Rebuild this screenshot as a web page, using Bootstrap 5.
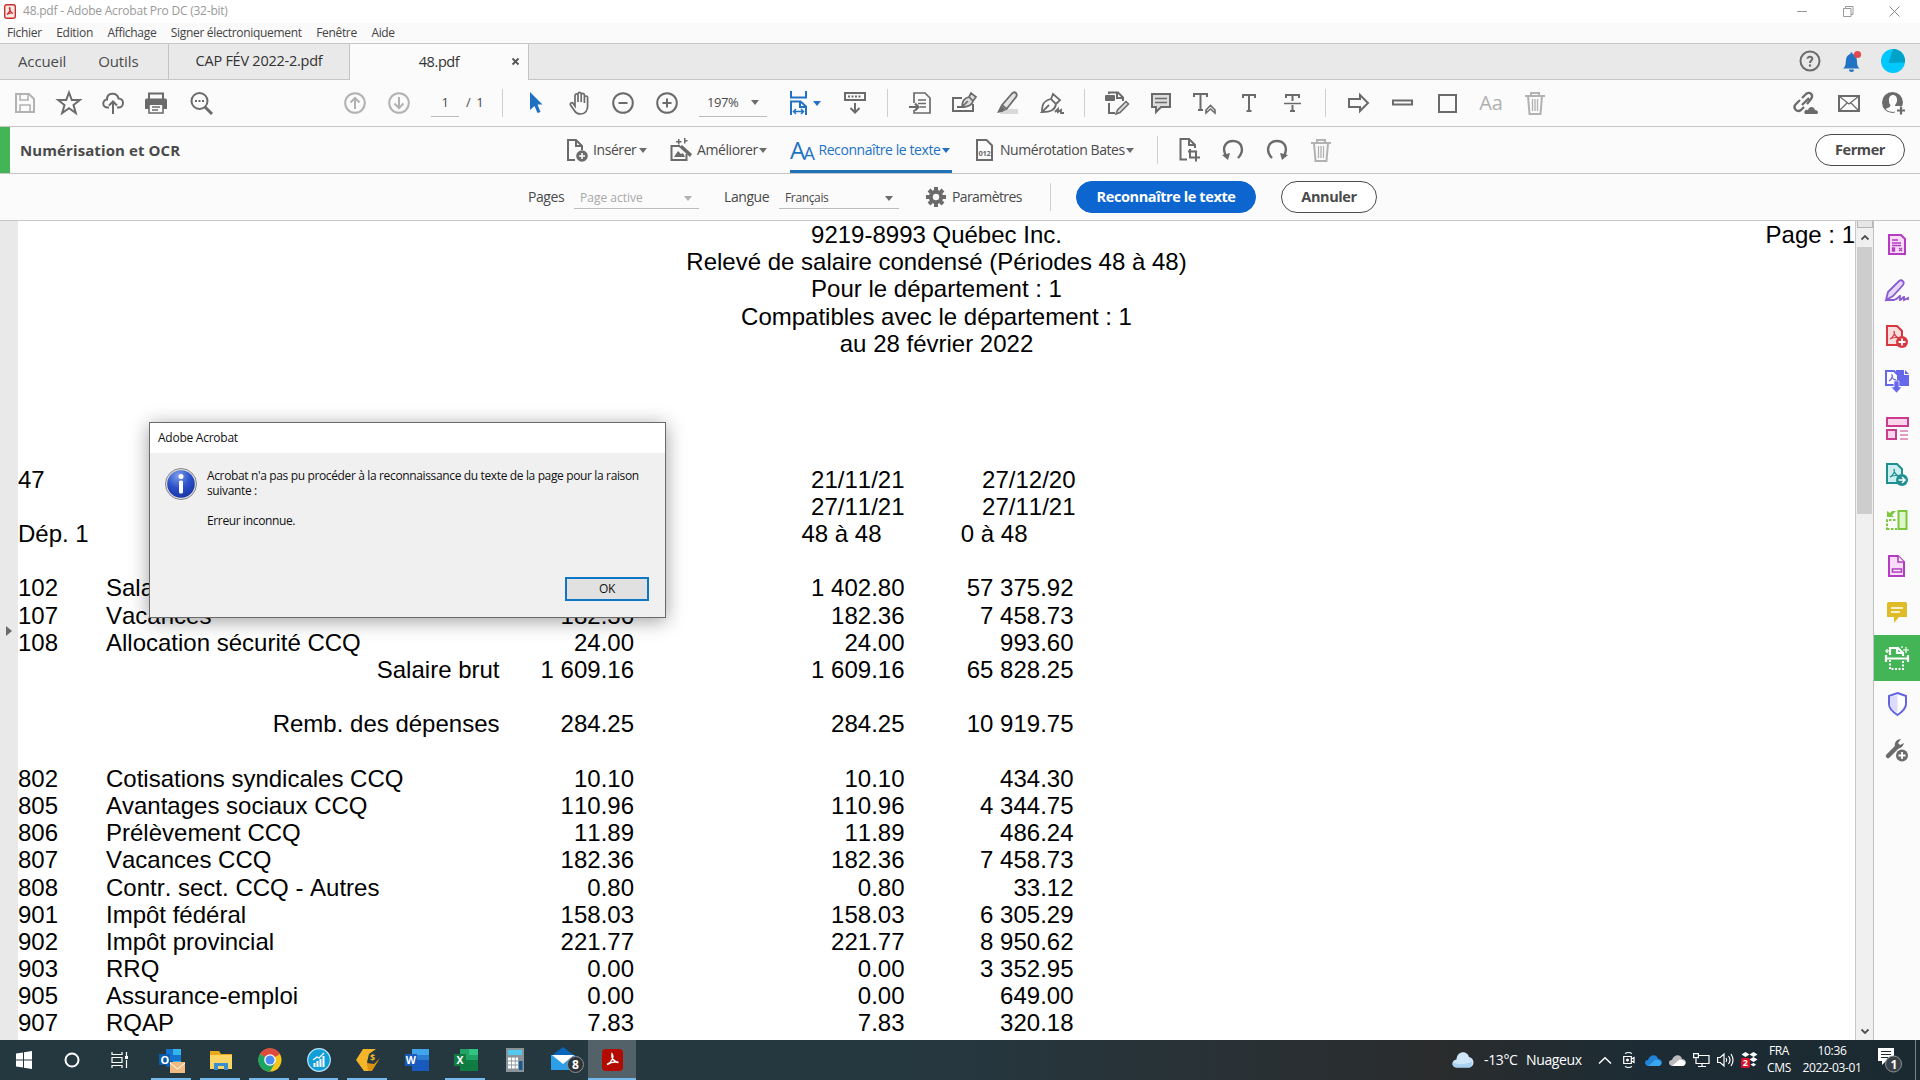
<!DOCTYPE html>
<html lang="fr">
<head>
<meta charset="utf-8">
<title>48.pdf - Adobe Acrobat Pro DC (32-bit)</title>
<link href="https://cdn.jsdelivr.net/npm/bootstrap@5.3.0/dist/css/bootstrap.min.css" rel="stylesheet">
<style>
body{width:1920px;height:1080px;overflow:hidden;background:#fff;font-family:"Open Sans","Noto Sans",sans-serif;font-size:12px;line-height:1.2;color:#4a4a4a;letter-spacing:-.35px}
svg{display:block;flex:none;overflow:visible}
.i{fill:none;stroke:#6b6b6b}
.i:not([stroke-width]){stroke-width:2}
.f{fill:#6b6b6b;stroke:none}
.dis{opacity:.5}
.titlebar{height:23px;color:#999;letter-spacing:-.22px}
.menubar{height:21px;background:#fafafa;border-bottom:1px solid #c6c6c6;color:#444;padding-left:7px;gap:14.5px;letter-spacing:-.32px}
.tabs{height:36px;background:#e9e9e9;font-size:15px;letter-spacing:-.12px}
.tabs>div{padding-bottom:1px}
.tab-home{width:169px;border-right:1px solid #c4c4c4;border-bottom:1px solid #c6c6c6;padding-left:18px;gap:32px}
.tab-doc{width:180px;border-bottom:1px solid #c6c6c6;font-size:14.5px;color:#333;letter-spacing:-.25px}
.tab-on{width:180px;background:#fbfbfb;border:solid #c4c4c4;border-width:0 1px;font-size:14.5px;color:#333;letter-spacing:-.4px}
.tab-rest{border-bottom:1px solid #c6c6c6}
.bar{background:#fbfbfb;border-bottom:1px solid #c6c6c6;height:47px}
.slot{width:44px;flex:none;display:flex;align-items:center;justify-content:center}
.vr1{width:1px;height:28px;background:#cfcfcf;flex:none}
.uline{border-bottom:1px solid #bcbcbc;height:28px;display:flex;align-items:center;flex:none}
.caret{width:0;height:0;border:4px solid transparent;border-top:5px solid #6b6b6b;border-bottom:0;flex:none}
.caret.blue{border-top-color:#2272c4}
.t14{font-size:14px;letter-spacing:-.42px;white-space:nowrap}
.pill{border:1px solid #4b4b4b;border-radius:16px;height:32px;display:flex;align-items:center;justify-content:center;font-weight:700;font-size:14.5px;letter-spacing:-.4px;flex:none;background:#fff}
.pill-blue{background:#0d66d0;border-color:#0d66d0;color:#fff}
.green{width:10px;background:#44b556;align-self:stretch;flex:none}
.tool-name{font-size:15px;letter-spacing:.1px;margin-left:10px;width:546px}
.ocr{width:162px;height:46px;border-bottom:3px solid #2272b9;color:#2272c4;padding-top:3px;flex:none}
.work{height:819px}
.lstrip{width:18px;background:#e9e9e9;flex:none}
.sheet{width:1837px;background:#fff;color:#000;font-family:"Liberation Sans",Arial,sans-serif;font-size:24px;letter-spacing:0;font-kerning:none;overflow:hidden;flex:none}
.ln{height:27.2px;line-height:27.2px;white-space:nowrap;display:grid;grid-template-columns:88px 393.5px 134.5px 270.5px 169px}
.ln.mid{display:block;text-align:center}
.ln>span:nth-child(n+3){text-align:right}
.pgno{right:0;top:0}
.sb{width:18px;background:#f0f0f0;border-left:1px solid #c8c8c8;flex:none}
.thumb{width:15px;height:267px;background:#cdcdcd}
.side{width:47px;background:#fbfbfb;border-left:1px solid #c0c0c0}
.side>div{height:46px;display:flex;align-items:center;justify-content:center}
.side .sel{background:#44b556}
.dlg{position:absolute;left:149px;top:422px;width:517px;height:196px;border:1px solid #6a6a6a;background:#f0f0f0;box-shadow:0 3px 18px rgba(0,0,0,.38);color:#111;letter-spacing:-.36px}
.dlg-head{height:30px;background:#fff;padding-left:8px;letter-spacing:-.25px}
.dlg-body{padding:15px 0 0 15px;height:139px}
.dlg-txt{line-height:15px;width:450px;margin-left:10px}
.okb{width:84px;height:24px;border:2px solid #0f76c4;background:#e1e1e1}
.task{height:40px;background:linear-gradient(90deg,#243840 0,#26373f 50%,#2a2c2d 75%,#1d2c34 85%,#1b2931 100%);color:#fff}
.tk{width:49px;height:40px;display:flex;align-items:center;justify-content:center;position:relative;flex:none}
.tk.run::after{content:"";position:absolute;bottom:0;left:4px;right:5px;height:2px;background:#76b9ed}
.tk.act{background:#536168}
.tk.act::after{left:0;right:0}
.tr{width:24px;flex:none;display:flex;justify-content:center}
</style>
<script src="https://cdn.jsdelivr.net/npm/bootstrap@5.3.0/dist/js/bootstrap.bundle.min.js"></script>
</head>
<body>
<header class="titlebar d-flex align-items-center">
  <svg class="ms-1" width="12" height="15" viewBox="0 0 12 15"><rect x=".7" y=".7" width="10.6" height="13.6" rx="2" fill="#fbe9e7" stroke="#c9302c" stroke-width="1.4"/><path d="M3 10.5C6 8.500 6.500 4 5.700 3.500S5.500 8 9 9.300C8 8.500 4.500 9 3 10.500" fill="none" stroke="#c9302c" stroke-width="1.2"/></svg>
  <span style="margin-left:7px">48.pdf - Adobe Acrobat Pro DC (32-bit)</span>
  <div class="ms-auto d-flex align-items-center" style="margin-right:20px;gap:35px">
    <svg width="11" height="11"><path d="M0 5.500h10" stroke="#999"/></svg>
    <svg width="11" height="11"><path d="M.5 2.500h7.500v8H.5zM2.500 2.500v-2h7.500v8H8" fill="none" stroke="#999"/></svg>
    <svg width="11" height="11"><path d="M.5.5l10 10M10.500.5l-10 10" stroke="#888"/></svg>
  </div>
</header>
<nav class="menubar d-flex align-items-center">
  <span>Fichier</span><span>Edition</span><span>Affichage</span><span>Signer électroniquement</span><span>Fenêtre</span><span>Aide</span>
</nav>
<div class="tabs d-flex">
  <div class="tab-home d-flex align-items-center"><span>Accueil</span><span>Outils</span></div>
  <div class="tab-doc d-flex align-items-center justify-content-center">CAP FÉV 2022-2.pdf</div>
  <div class="tab-on d-flex align-items-center justify-content-center position-relative">48.pdf
    <svg class="position-absolute" style="right:9px" width="7" height="7"><path d="M.5.5l6 6M6.500.5l-6 6" stroke="#555" stroke-width="1.8"/></svg></div>
  <div class="tab-rest flex-grow-1 d-flex align-items-center justify-content-end" style="padding-right:15px">
    <svg width="22" height="22" viewBox="0 0 22 22"><circle class="i" cx="11" cy="11" r="9.500"/><path class="i" d="M8.500 8.800C8.500 6 13.600 6.200 13.300 8.900 13.100 10.500 11 10.700 11 13"/><circle class="f" cx="11" cy="15.500" r="1.200"/></svg>
    <svg style="margin-left:22px" width="18" height="21" viewBox="0 0 18 21"><path fill="#2272c4" d="M0 17.500c3-2 2.500-5 3-9C3.400 5 5.500 3.500 7.500 3V1.500h2V3c2 .5 4 2 4.300 5.500.5 4 0 7 3 9zM6 18.500h5a2.500 2.500 0 0 1-5 0"/><circle cx="14.500" cy="3.500" r="3.600" fill="#e34850"/></svg>
    <svg style="margin-left:20px" width="24" height="24" viewBox="0 0 24 24"><circle cx="12" cy="12" r="12" fill="#00c8ff"/><path d="M12 0a12 12 0 0 1 12 13.500L7.500 14z" fill="#00a3c7"/></svg>
  </div>
</div>

<div class="bar d-flex align-items-center" style="padding-left:3px">
  <div class="slot"><svg class="dis" width="20" height="20"><path class="i" d="M1 1h13l5 5v13H1z"/><path class="i" d="M5 1v6h8V1M5 19v-7h10v7" stroke-width="1.600"/></svg></div>
  <div class="slot"><svg width="24" height="24"><path class="i" d="M12 1.500l2.800 7.500h8l-6.300 5 2.300 8L12 17.300 5.200 22l2.300-8-6.300-5h8z"/></svg></div>
  <div class="slot"><svg width="22" height="22"><path class="i" d="M7 15.500H5.500a4 4 0 0 1-.5-8C5 0 15 0 16.500 6.500a4.500 4.500 0 0 1 0 9H15M11 22V10M7 13.500l4-4 4 4"/></svg></div>
  <div class="slot" style="margin:0 1px 0 -1px"><svg width="22" height="22"><path class="i" d="M4 7V1.500h14V7"/><path class="f" d="M0 8q0-1.500 1.500-1.500h19Q22 6.500 22 8v9h-4v-4H4v4H0z"/><path class="i" d="M4 13v8h14v-8M7 15h8M7 18h6" stroke-width="1.600"/></svg></div>
  <div class="slot"><svg width="23" height="23"><circle class="i" cx="9.500" cy="9" r="8"/><path class="i" d="M15 15l7 7" stroke-width="3"/><path class="i" d="M5 9h9" stroke-dasharray="2 1.500"/></svg></div>
  <div class="slot dis" style="margin-left:110px"><svg width="22" height="22"><circle class="i" cx="11" cy="11" r="9.800"/><path class="i" d="M11 17V6M6.500 10.500L11 6l4.500 4.500"/></svg></div>
  <div class="slot dis"><svg width="22" height="22"><circle class="i" cx="11" cy="11" r="9.800"/><path class="i" d="M11 5v11M6.500 11.500L11 16l4.500-4.500"/></svg></div>
  <div class="uline justify-content-center t14" style="width:28px;margin-left:10px;font-size:13px">1</div>
  <span class="t14" style="margin-left:7px;width:36px;word-spacing:3px;font-size:13px">/ 1</span>
  <div class="vr1"></div>
  <div class="slot" style="margin-left:11px"><svg width="14" height="22"><path fill="#1f6fc2" d="M1 0l12.500 12.500H8.500L11.500 20 8.500 21 5.500 14 1 18z"/></svg></div>
  <div class="slot"><svg width="22" height="24"><path class="i" stroke-width="1.700" d="M6 12.500V4.500c0-2.200 3-2.200 3 0V11 3c0-2.200 3.200-2.200 3.200 0v8-7c0-2.200 3.200-2 3.200 0v8-5.500c0-2 3.200-2 3.200 0V15c0 4-2 8-7 8-3.500 0-5-1-6.600-4L1.500 14c-1-2 1.500-3 2.700-1.500L6 15z"/></svg></div>
  <div class="slot" style="margin-left:-1px"><svg width="22" height="22"><circle class="i" cx="11" cy="11" r="9.800"/><path class="i" d="M6.500 11h9"/></svg></div>
  <div class="slot"><svg width="22" height="22"><circle class="i" cx="11" cy="11" r="9.800"/><path class="i" d="M6.500 11h9M11 6.500v9"/></svg></div>
  <div class="uline t14" style="width:68px;margin-left:10px;padding-left:8px;font-size:13px"><span style="width:44px">197%</span><i class="caret"></i></div>
  <svg style="margin-left:23px" width="18" height="24"><path fill="none" stroke="#2272c4" stroke-width="2" d="M1 0v6.500h15V0M1 24V10.500h9.500l5.500 5V24M10 11v5h6"/><path fill="none" stroke="#2272c4" stroke-width="1.500" d="M3.500 20.500h10M6 18l-2.500 2.500L6 23M11 18l2.500 2.500L11 23"/></svg>
  <i class="caret blue" style="margin-left:5px"></i>
  <div class="slot" style="margin-left:12px"><svg width="22" height="22"><rect class="i" x="1" y="1" width="20" height="7"/><path class="i" d="M4 4.500h14" stroke-dasharray="2 1.500"/><path class="i" d="M11 11v9M6.500 16l4.500 4.500 4.500-4.500"/></svg></div>
  <div class="vr1" style="margin-left:10px"></div>
  <div class="slot" style="margin-left:10px"><svg width="22" height="22"><path class="i" d="M5 11V1h11l5 5v15H5v-3M9 8h8M9 11.500h8M11 15h6" stroke-width="1.700"/><path class="i" d="M0 15h9M6 11.500L9.500 15 6 18.500" stroke-width="2.200"/></svg></div>
  <div class="slot"><svg width="24" height="22"><path class="i" d="M10 6H1v13h20v-7M5 15h8"/><path fill="#ddd" stroke="#6b6b6b" stroke-width="1.700" d="M10 15c0-6 2-9 7-10l4 4c-1 5-5 6-11 6l6-6M17 5l2-4 5 4-3 4"/></svg></div>
  <div class="slot"><svg width="24" height="24"><path fill="#d9d9d9" d="M6 18h16v5H4z"/><path fill="#e3e3e3" stroke="#6b6b6b" stroke-width="1.800" d="M6 14L16 2.500c3-3 6 .5 4 3.500L10.500 18z"/><path class="f" d="M5 14l5 5-4 2-5 1z"/></svg></div>
  <div class="slot"><svg width="24" height="24"><path class="i" d="M2 21c0-7 1-11 9-13l5 5c-1 6-5 8-14 8l7-7M11 8l2-5 7 6-4 4M15 21l3-3v3l3-2v3h3" stroke-width="1.800"/></svg></div>
  <div class="vr1" style="margin-left:10px"></div>
  <div class="slot" style="margin-left:10px"><svg width="24" height="24"><rect class="f" y="4" width="10" height="6" rx="1"/><path class="i" d="M4 3V1.500h9l5 5V10M12 2v5h6M4 12v10h6"/><path fill="#ddd" stroke="#6b6b6b" stroke-width="1.500" d="M11 23l1.500-4L21 10.500l2.500 2.500L15 21.500z"/></svg></div>
  <div class="slot"><svg width="20" height="22"><path fill="#ddd" stroke="#6b6b6b" stroke-width="2" d="M1 2h18v13h-9l-5 5v-5H1z"/><path class="i" d="M4 6.500h12M4 10.500h12" stroke-width="1.500"/></svg></div>
  <div class="slot"><svg width="24" height="22"><path class="i" d="M1 5V2h13v3M7.500 2v16M5 18h5"/><path class="i" d="M13 21v-3l4.500-4.500L22 18v3l-4.500-4z" stroke-width="1.600"/></svg></div>
  <div class="slot"><svg width="14" height="20"><path class="i" d="M1 5V2h12v3M7 2v16M4.500 18h5"/></svg></div>
  <div class="slot"><svg width="18" height="20"><path class="i" d="M2 5V2h13v3M8.500 2v6M8.500 12v6M6 18h5"/><path class="i" stroke-width="1.500" d="M0 10.500h17"/></svg></div>
  <div class="vr1" style="margin-left:10px"></div>
  <div class="slot" style="margin-left:11px"><svg width="22" height="18"><path class="i" d="M1 5h11V1l8 8-8 8v-4H1z"/></svg></div>
  <div class="slot"><svg width="22" height="8"><rect class="i" x="1" y="1.500" width="19" height="4"/></svg></div>
  <div class="slot"><svg width="19" height="19"><rect class="i" x="1" y="1" width="17" height="17"/></svg></div>
  <div class="slot" style="font-size:20px;color:#b0b0b0;letter-spacing:-.2px">Aa</div>
  <div class="slot dis"><svg width="20" height="23"><path class="i" d="M0 4h20M6 4V1h8v3M3 4l1.500 18h11L17 4"/><path class="i" d="M7.500 7v12M10 7v12M12.500 7v12" stroke-width="1.300"/></svg></div>
  <div class="slot ms-auto"><svg width="25" height="22"><path class="i" stroke-width="2.300" d="M9 13l7-7M7 8L2.500 12.500C-.5 16 4 21 8 18l3-3M9 6l4-4c4-3 8 1 5 5l-4 5"/><path class="f" d="M12 22c-2-3 1-5 3-4 1-4 6-4 7 0 3 0 4 3 2 4z"/></svg></div>
  <div class="slot"><svg width="22" height="17"><path class="i" d="M1 1h20v15H1z"/><path class="i" d="M1 1l10 8L21 1M1 16l8-8M21 16l-8-8" stroke-width="1.300"/></svg></div>
  <div class="slot" style="margin-right:5px"><svg width="23" height="23"><circle class="f" cx="10.500" cy="10.500" r="10.500"/><path fill="#fbfbfb" d="M7 9c-1-8 9-8 8 0-.5 2-1 3-2 4 0 2 3 2.500 4 3l-5 4C8 20 5 19 3.500 17c1-1 5-1 5-4C7.500 12 7 11 7 9M13 14h10v9H13z"/><path class="i" d="M19 14.500v8M15 18.500h8" stroke-width="2.200"/></svg></div>
</div>

<div class="bar d-flex align-items-center">
  <div class="green"></div>
  <span class="tool-name fw-bold">Numérisation et OCR</span>
  <svg width="22" height="23"><path class="i" d="M9 21H2V1h8l6 6v4M10 1v6h6"/><circle class="f" cx="16" cy="17" r="5.800"/><path d="M16 14v6M13 17h6" stroke="#fff" stroke-width="1.500"/></svg>
  <span class="t14" style="margin-left:5px;width:46px">Insérer</span><i class="caret"></i>
  <svg style="margin-left:23px" width="22" height="24"><path class="i" d="M10 8H1.500v14h15v-6"/><path class="f" d="M4 19l4-6 3 3 2-1 2 4zM9 9l3-2 10 9-2 3zM8 1h1.500v2h2v1.500h-2v2H8v-2H6V3h2zM14 0h1.500v2h2v1.500h-2v2H14z"/></svg>
  <span class="t14" style="margin-left:5px;width:62px">Améliorer</span><i class="caret"></i>
  <div class="ocr d-flex align-items-center" style="margin-left:23px">
    <span style="font-size:24px;letter-spacing:-1.8px;line-height:1">A</span><span style="font-size:18px;line-height:1;padding-top:5px">A</span>
    <span class="t14" style="margin-left:4px;width:124px">Reconnaître le texte</span><i class="caret blue"></i></div>
  <svg style="margin-left:24px" width="17" height="23"><path class="i" d="M1 1h9.500L16 6.500V21H1z"/><text x="2.500" y="16.500" font-size="7.500" font-weight="700" fill="#6b6b6b">012</text></svg>
  <span class="t14" style="margin-left:7px;width:126px">Numérotation Bates</span><i class="caret"></i>
  <div class="vr1" style="margin-left:23px"></div>
  <div class="slot" style="margin-left:9px"><svg width="21" height="24"><path class="i" d="M8 21.500H1.500V1H10l6 6v3M10 1v6h6"/><path class="i" d="M9 13.500h8v10M11 11v8.500h10"/></svg></div>
  <div class="slot"><svg width="22" height="22"><path class="i" d="M4 17C-1 7 5 2 11 2c9 0 12 10 5 17" stroke-width="2.400"/><path class="f" d="M0 16l8-2-2 7z"/></svg></div>
  <div class="slot"><svg width="22" height="22"><path class="i" d="M18 17C23 7 17 2 11 2 2 2-1 12 6 19" stroke-width="2.400"/><path class="f" d="M22 16l-8-2 2 7z"/></svg></div>
  <div class="slot dis"><svg width="20" height="23"><path class="i" d="M0 4h20M6 4V1h8v3M3 4l1.500 18h11L17 4"/><path class="i" d="M7.500 7v12M10 7v12M12.500 7v12" stroke-width="1.300"/></svg></div>
  <div class="pill ms-auto" style="width:90px;margin-right:15px">Fermer</div>
</div>

<div class="bar d-flex align-items-center" style="padding-left:528px">
  <span class="t14" style="width:46px">Pages</span>
  <div class="uline pt-1" style="width:125px;height:24px;padding-left:6px;color:#a8a8a8;letter-spacing:0"><span style="width:104px">Page active</span><i class="caret dis"></i></div>
  <span class="t14" style="margin-left:25px;width:55px">Langue</span>
  <div class="uline pt-1" style="width:120px;height:24px;padding-left:6px"><span style="width:100px">Français</span><i class="caret"></i></div>
  <svg style="margin-left:27px" width="20" height="20" viewBox="-10 -10 20 20"><circle class="i" r="5.200" stroke-width="4"/><path class="i" stroke-width="4" d="M0-10v4M0 10V6M-10 0h4M10 0H6M-7-7l2.500 2.500M7 7L4.500 4.500M-7 7l2.500-2.500M7-7L4.500-4.500"/></svg>
  <span class="t14" style="margin-left:6px;width:98px;letter-spacing:-.6px">Paramètres</span>
  <div class="vr1"></div>
  <div class="pill pill-blue" style="width:180px;margin-left:25px">Reconnaître le texte</div>
  <div class="pill" style="width:96px;margin-left:25px">Annuler</div>
</div>

<main class="work d-flex">
  <div class="lstrip d-flex align-items-center justify-content-center"><svg width="6" height="10"><path class="f" d="M0 0l6 5-6 5z"/></svg></div>
  <section class="sheet position-relative">
    <div class="pgno position-absolute ln d-block">Page : 1</div>
    <div class="ln mid">9219-8993 Québec Inc.</div>
    <div class="ln mid">Relevé de salaire condensé (Périodes 48 à 48)</div>
    <div class="ln mid">Pour le département : 1</div>
    <div class="ln mid">Compatibles avec le département : 1</div>
    <div class="ln mid">au 28 février 2022</div>
    <div class="ln"></div><div class="ln"></div><div class="ln"></div><div class="ln"></div>
    <div class="ln"><span>47</span><span></span><span></span><span>21/11/21</span><span style="margin-right:-2px">27/12/20</span></div>
    <div class="ln"><span></span><span></span><span></span><span>27/11/21</span><span style="margin-right:-2px">27/11/21</span></div>
    <div class="ln"><span>Dép. 1</span><span></span><span></span><span style="padding-right:23px">48 à 48</span><span style="padding-right:46px">0 à 48</span></div>
    <div class="ln"></div>
    <div class="ln"><span>102</span><span>Salaire</span><span></span><span>1 402.80</span><span>57 375.92</span></div>
    <div class="ln"><span>107</span><span>Vacances</span><span>182.36</span><span>182.36</span><span>7 458.73</span></div>
    <div class="ln"><span>108</span><span>Allocation sécurité CCQ</span><span>24.00</span><span>24.00</span><span>993.60</span></div>
    <div class="ln"><span></span><span class="text-end">Salaire brut</span><span>1 609.16</span><span>1 609.16</span><span>65 828.25</span></div>
    <div class="ln"></div>
    <div class="ln"><span></span><span class="text-end">Remb. des dépenses</span><span>284.25</span><span>284.25</span><span>10 919.75</span></div>
    <div class="ln"></div>
    <div class="ln"><span>802</span><span>Cotisations syndicales CCQ</span><span>10.10</span><span>10.10</span><span>434.30</span></div>
    <div class="ln"><span>805</span><span>Avantages sociaux CCQ</span><span>110.96</span><span>110.96</span><span>4 344.75</span></div>
    <div class="ln"><span>806</span><span>Prélèvement CCQ</span><span>11.89</span><span>11.89</span><span>486.24</span></div>
    <div class="ln"><span>807</span><span>Vacances CCQ</span><span>182.36</span><span>182.36</span><span>7 458.73</span></div>
    <div class="ln"><span>808</span><span>Contr. sect. CCQ - Autres</span><span>0.80</span><span>0.80</span><span>33.12</span></div>
    <div class="ln"><span>901</span><span>Impôt fédéral</span><span>158.03</span><span>158.03</span><span>6 305.29</span></div>
    <div class="ln"><span>902</span><span>Impôt provincial</span><span>221.77</span><span>221.77</span><span>8 950.62</span></div>
    <div class="ln"><span>903</span><span>RRQ</span><span>0.00</span><span>0.00</span><span>3 352.95</span></div>
    <div class="ln"><span>905</span><span>Assurance-emploi</span><span>0.00</span><span>0.00</span><span>649.00</span></div>
    <div class="ln"><span>907</span><span>RQAP</span><span>7.83</span><span>7.83</span><span>320.18</span></div>
  </section>
  <div class="sb d-flex flex-column align-items-center">
    <div style="width:16px;height:7px;background:#e6e6e6;border:1px solid #b5b5b5;border-top:0"></div>
    <svg style="margin:7px 0 7px" width="8" height="5"><path d="M.5 4.500L4 1l3.500 3.500" fill="none" stroke="#505050" stroke-width="1.800"/></svg>
    <div class="thumb"></div>
    <svg class="mt-auto" style="margin-bottom:6px" width="8" height="5"><path d="M.5.5L4 4 7.500.5" fill="none" stroke="#505050" stroke-width="1.800"/></svg>
  </div>
  <aside class="side">
    <div><svg width="18" height="21"><path d="M1 1h12l4 4v15H1z" fill="#f8dcf8" stroke="#b43cc0" stroke-width="2"/><path d="M4 6h6M4 9h9M4 11.500h9M4.500 14h2v3h-2zM11 14l3 3M14 14l-3 3" stroke="#b43cc0" stroke-width="1.300" fill="#b43cc0"/></svg></div>
    <div><svg width="24" height="22"><path d="M1 21l2-8L14 2c3-2 6 1 4 4L8 17zM1 21h8c4-1 5-4 6-4v4c2 0 2-3 4-3v3l4-2v2" fill="#e4d9fb" stroke="#8a5bd0" stroke-width="1.800"/></svg></div>
    <div><svg width="22" height="23"><path d="M1 1h10l5 5v14H1z" fill="#fbdede" stroke="#d7373f" stroke-width="2"/><path d="M4 14c4-2 5-6 4-8 0 4 2 6 5 7-3-1-6-.5-9 1" fill="none" stroke="#d7373f" stroke-width="1.200"/><circle cx="16" cy="17" r="6" fill="#d7373f"/><path d="M16 13.500v7M12.500 17h7" stroke="#fff" stroke-width="1.800"/></svg></div>
    <div><svg width="24" height="24"><path d="M11 0h8v5h5v11H11z" fill="#6767ec"/><path d="M20 0l4 4h-4z" fill="#6767ec"/><path d="M1 1h8l4 4v10H1z" fill="#fff" stroke="#6767ec" stroke-width="2"/><path d="M4 11c3-2 4-5 3-6 0 3 2 5 4 5M11.500 10v8" fill="none" stroke="#6767ec" stroke-width="1.300"/><path d="M9 11h5v6h3l-5.500 6L6 17h3z" fill="#6767ec" stroke="#fff" stroke-width=".6"/></svg></div>
    <div><svg width="23" height="23"><path d="M1 1h21v8H1zM1 13h9v9H1z" fill="#fbd5ea" stroke="#cb3b8f" stroke-width="2"/><path d="M14 14h8M14 18h8M14 22h8" stroke="#cb3b8f" stroke-width="1.200"/></svg></div>
    <div><svg width="22" height="23"><path d="M1 1h10l5 5v14H1z" fill="#cdeeee" stroke="#1f8f92" stroke-width="2"/><path d="M4 14c4-2 5-6 4-8 0 4 2 6 5 7-3-1-6-.5-9 1" fill="none" stroke="#1f8f92" stroke-width="1.200"/><circle cx="16" cy="17" r="6" fill="#1f8f92"/><path d="M12.500 17h6M16 14l3 3-3 3" fill="none" stroke="#fff" stroke-width="1.500"/></svg></div>
    <div><svg width="22" height="22"><path d="M12.500 2h8v18h-8z" fill="#dff5cc" stroke="#7cc83c" stroke-width="2"/><path d="M1 21V11h10M1 20h10" fill="none" stroke="#7cc83c" stroke-width="2" stroke-dasharray="2.500 1.500"/><path d="M1 2v6h7l-2-2 4-4H6L4 4z" fill="#7cc83c"/></svg></div>
    <div><svg width="18" height="22"><path d="M1 1h9l6 6v14H1z" fill="#f8dcf8" stroke="#b43cc0" stroke-width="2"/><path d="M10 1v6h6M4.500 14h9v3h-9z" fill="#fff" stroke="#b43cc0" stroke-width="1.600"/></svg></div>
    <div><svg width="20" height="22"><path d="M1.500 1h17Q20 1 20 2.500V16h-8l-5 6v-6H0V2.500Q0 1 1.500 1" fill="#e0bb28"/><path d="M4 7h12M4 11h9" stroke="#fff" stroke-width="1.600"/></svg></div>
    <div class="sel"><svg width="24" height="24"><path d="M5 9V2h8l5 5v3M12 2v5h5M1 9v7M23 9v7M1 12.500h22" fill="none" stroke="#fff" stroke-width="2.200"/><path d="M5 14v9h13v-9" fill="none" stroke="#fff" stroke-width="2" stroke-dasharray="2 1.500"/><path d="M2 3v4M0 5h4M21 1v6M18 4h6M17 0v2" stroke="#fff" stroke-width="1.200"/></svg></div>
    <div><svg width="19" height="24"><path d="M9.500 1L18 4v8c0 5-4 8-8.500 11C5 20 1 17 1 12V4z" fill="#fff" stroke="#6463e0" stroke-width="2"/><path d="M9.500 3v18C5 18 2 16 2 12V5z" fill="#dcdcfa"/></svg></div>
    <div><svg width="24" height="24"><path class="i" d="M3 18l9-9" stroke-width="4.500" stroke-linecap="round"/><path class="f" d="M16 1c-4 0-7 3-6 8 3 3 8 1 9-4l-4 2-2-2z"/><circle class="f" cx="17" cy="17.500" r="6"/><path d="M17 14v7M13.500 17.500h7" stroke="#fff" stroke-width="1.800"/></svg></div>
  </aside>
</main>

<footer class="task d-flex align-items-center">
  <div class="tk" style="width:48px"><svg width="16" height="18"><path fill="#fff" d="M0 2.500l7-1V8.500H0zM8 1.300L16 0v8.500H8zM0 9.500h7v7l-7-1zM8 9.500h8V18l-8-1.300z"/></svg></div>
  <div class="tk" style="width:48px"><svg width="16" height="16"><circle cx="8" cy="8" r="6.500" fill="none" stroke="#fff" stroke-width="2"/></svg></div>
  <div class="tk" style="width:47px"><svg width="18" height="16"><path d="M1 0v2.500h10V0M1 5.500h10v5H1zM1 16v-2.500h10V16M15.500 0v4M15.500 8v8" fill="none" stroke="#fff" stroke-width="1.200"/><path d="M14 4h3v3h-3z" fill="#fff"/></svg></div>
  <div class="tk run" style="margin-left:4px"><svg width="26" height="25"><path fill="#1373ce" d="M7 1h15v18H7z"/><path fill="#35b5ee" d="M14 1h8v6h-8zM14 13h8v6h-8z"/><path fill="#0a5ca8" d="M7 13h7v6H7zM0 6h11v11H0z"/><text x="1.500" y="15.500" font-size="11" font-weight="700" fill="#fff">O</text><path fill="#f0bb80" d="M11 14h15v11H11z"/><path d="M11 15l7.500 6 7.500-6" fill="none" stroke="#fff"/></svg></div>
  <div class="tk run"><svg width="22" height="20"><path fill="#e8a91c" d="M0 1h9l2 3h11v14H0z"/><path fill="#fbd667" d="M0 5h22v14H0z"/><path fill="#3b8fd0" d="M4 20v-7h14v7h-4v-4H8v4z"/></svg></div>
  <div class="tk run"><svg width="24" height="24" viewBox="-12 -12 24 24"><circle r="11.500" fill="#f6c519"/><path d="M0 0L-10-6A11.500 11.500 0 0 1 10-6z" fill="#dd4b3e"/><path d="M0 0L-10-6A11.500 11.500 0 0 0 0 11.500L5 3z" fill="#1da362"/><circle r="5.800" fill="#fff"/><circle r="4.500" fill="#4a8af4"/></svg></div>
  <div class="tk run"><svg width="24" height="24"><circle cx="12" cy="12" r="11.300" fill="#119fda" stroke="#b9e4f5" stroke-width="1.200"/><path d="M7.500 19v-4M10.500 19v-6M13.500 19v-8M16.500 19V8" stroke="#fff" stroke-width="2"/><path d="M6 12l4-3 2 1 5-5" fill="none" stroke="#fff" stroke-width="1.300"/></svg></div>
  <div class="tk run"><svg width="24" height="24"><path fill="#f5b52b" d="M7 1h13l-7 5-2 8 3 9H8L0 12z"/><path fill="#d89412" d="M11 15l7 1 6-6-8 13h-4z"/><text x="14" y="12.500" font-size="9" font-weight="700" fill="#f5b52b">$</text></svg></div>
  <div class="tk"><svg width="24" height="22"><path fill="#2b7cd3" d="M7 0h17v22H7z"/><path fill="#41a5ee" d="M7 0h17v6H7z"/><path fill="#185abd" d="M7 11h17v11H7zM0 5h12v12H0z"/><text x=".8" y="15" font-size="10.500" font-weight="700" fill="#fff">W</text></svg></div>
  <div class="tk run"><svg width="24" height="22"><path fill="#21a366" d="M6 0h18v22H6z"/><path fill="#33c481" d="M15 0h9v6h-9z"/><path fill="#107c41" d="M6 11h18v11H6zM0 5h12v12H0z"/><text x="2.500" y="15" font-size="10.500" font-weight="700" fill="#fff">X</text></svg></div>
  <div class="tk"><svg width="18" height="24"><path fill="#89939a" d="M0 0h18v24H0z"/><path fill="#53c8ee" d="M2 2h14v5H2z"/><path d="M2 11h10M2 15h10M2 19h10" stroke="#fff" stroke-width="3" stroke-dasharray="3 .8"/><path fill="#155a94" d="M13 13h3.500v9H13z"/></svg></div>
  <div class="tk"><svg width="34" height="26" style="margin-left:9px"><path fill="#0a64b8" d="M0 9L12 0l12 9z"/><path fill="#2d9fe8" d="M0 8h24v15H0z"/><path fill="#fff" d="M1 8h22l-11 9z"/><circle cx="24.500" cy="17.500" r="8" fill="#2e3438" stroke="#8b9195"/><text x="21" y="22" font-size="12" font-weight="700" fill="#fff">8</text></svg></div>
  <div class="tk run act" style="width:48px"><svg width="21" height="22"><rect width="21" height="22" rx="4" fill="#b30b00"/><path d="M5 15.500c5-2 7-8 5-10.500-1 4 2 8 6.500 8.500-3-1-8 0-11.500 2" fill="none" stroke="#fff" stroke-width="1.500"/></svg></div>
  <svg style="margin-left:816px" width="22" height="16"><path fill="#cfe6f8" d="M5 15.500C-1 15.500-1 8 4.500 7.500 5-1 15-2 17 5c6 1 6 10 0 10.500z"/><path fill="#a8d1f2" d="M5 15.500c-4 0-5-3-4-5 6 3 13 2 19-1 0 4-1 6-3 6z"/></svg>
  <span style="margin-left:10px;font-size:14px;width:42px;letter-spacing:-.35px">-13°C</span><span style="font-size:14px;width:67px;letter-spacing:-.35px">Nuageux</span>
  <div class="tr"><svg width="12" height="7"><path d="M0 6.500L6 .8l6 5.700" fill="none" stroke="#fff" stroke-width="1.500"/></svg></div>
  <div class="tr"><svg width="12" height="16"><path d="M2 1.500q3.500-2 7 0M2 14.500q3.500 2 7 0M.7 4.500h7.600v7H.7zM8.500 7l2.500-1.500v5L8.500 9" fill="none" stroke="#fff" stroke-width="1.200"/><circle cx="4.500" cy="8" r="1.500" fill="#fff"/></svg></div>
  <div class="tr"><svg width="17" height="11"><path fill="#1f83d8" d="M3 11C-1 10-1 5 3 5c2-6 9-6 10-1 5 0 5 6 1 7z"/><path fill="#3ba7ee" d="M3 11l7-6c5-1 9 4 4 6z"/></svg></div>
  <div class="tr"><svg width="17" height="11"><path fill="#bcbcbc" d="M3 11C-1 10-1 5 3 5c2-6 9-6 10-1 5 0 5 6 1 7z"/><path fill="#fff" d="M3 11l7-6c5-1 9 4 4 6z"/></svg></div>
  <div class="tr"><svg width="17" height="15"><path d="M5 2.500h11v8H3V5.500M9 10.500v3M5 13.500h8M.6.600h4.800v4H.6z" fill="none" stroke="#fff" stroke-width="1.200"/></svg></div>
  <div class="tr"><svg width="17" height="14"><path d="M.6 4.500h2.600L7 1v12L3.200 9.500H.6zM9 5q1.500 2 0 4M11.500 3q3 4 0 8M14 1q4 6 0 12" fill="none" stroke="#fff" stroke-width="1.200"/></svg></div>
  <div class="tr"><svg width="17" height="16"><path fill="#fff" d="M4.500 0l4 2.500-4 2.500-4-2.500zM12.500 0l4 2.500-4 2.500-4-2.500zM12.500 5l4 2.500-4 2.500-4-2.500zM12.500 11l2.500 1.500-2.500 2-3-2z"/><rect y="6" width="9" height="10" rx="1.500" fill="#d9102b"/><text x="1.800" y="14" font-size="9" font-weight="700" fill="#fff">2</text></svg></div>
  <div class="text-center" style="margin-left:4px;width:28px;line-height:17.500px;margin-top:-2px">FRA<br>CMS</div>
  <div class="text-center" style="margin-left:8px;width:62px;line-height:17.500px;margin-top:-2px">10:36<br>2022-03-01</div>
  <svg style="margin-left:15px" width="26" height="26"><path fill="#fff" d="M0 1h16v13H8l-4 4v-4H0z"/><path d="M3 4.500h10M3 7.500h10M3 10.500h7" stroke="#1d2c34" stroke-width="1.200"/><circle cx="15.500" cy="17" r="8" fill="#3a4146" stroke="#8b9195"/><text x="12.500" y="21.500" font-size="12" font-weight="700" fill="#fff">1</text></svg>
  <div style="width:1px;height:40px;background:#7b868c;margin-left:11px"></div>
</footer>

<div class="dlg" role="dialog">
  <div class="dlg-head d-flex align-items-center">Adobe Acrobat</div>
  <div class="dlg-body d-flex">
    <svg width="32" height="32" viewBox="0 0 32 32"><defs><radialGradient id="g" cx=".4" cy=".2" r=".9"><stop offset="0" stop-color="#7e9fe8"/><stop offset=".5" stop-color="#2a4fc8"/><stop offset="1" stop-color="#1531a0"/></radialGradient></defs><circle cx="16" cy="16" r="15.500" fill="#ddd" stroke="#888"/><circle cx="16" cy="16" r="13.800" fill="url(#g)"/><circle cx="16" cy="8.500" r="2.500" fill="#fff"/><rect x="14" y="12.500" width="4" height="13" rx="1.500" fill="#fff"/></svg>
    <div class="dlg-txt">Acrobat n'a pas pu procéder à la reconnaissance du texte de la page pour la raison<br>suivante :<br><br>Erreur inconnue.</div>
  </div>
  <div class="okb position-absolute d-flex align-items-center justify-content-center" style="right:16px;bottom:16px">OK</div>
</div>
</body>
</html>
